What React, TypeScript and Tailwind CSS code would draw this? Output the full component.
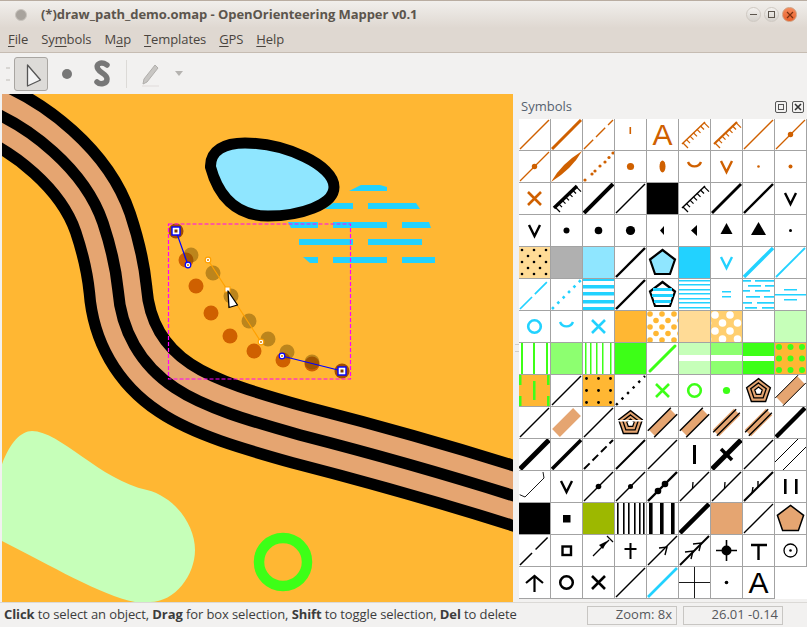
// App.tsx
// OpenOrienteering Mapper window: map canvas on the left, symbol palette dock on the right.
import type { ReactNode } from "react";

const O = "#cf6000";
const K = "#000000";
const B = "#22d2ff";
const G = "#3dff17";
const T = "#e5a571";
const LB = "#8fe6ff";
const Y = "#ffb733";

function Diag({ w = 1.5, c = K, dash, round }: { w?: number; c?: string; dash?: string; round?: boolean }) {
	return <line x1={1} y1={30} x2={30} y2={1} stroke={c} strokeWidth={w} strokeDasharray={dash} strokeLinecap={round ? "round" : "butt"} />;
}

function Dot({ x = 15.5, y = 15.5, r = 3, c = K }: { x?: number; y?: number; r?: number; c?: string }) {
	return <circle cx={x} cy={y} r={r} fill={c} />;
}

function Fill({ c }: { c: string }) {
	return <rect x={0} y={0} width={31} height={31} fill={c} />;
}

function Bar({ x = 0, y, w = 31, h, c }: { x?: number; y: number; w?: number; h: number; c: string }) {
	return <rect x={x} y={y} width={w} height={h} fill={c} />;
}

function Ruler({ c, w = 1.5 }: { c: string; w?: number }) {
	const ticks = [0, 1, 2, 3, 4, 5, 6];
	return (
		<g stroke={c} fill="none">
			<line x1={3} y1={25} x2={26} y2={3} strokeWidth={w} />
			{ticks.map((i) => {
				const x = 4 + i * 3.5;
				const y = 24 - i * 3.4;
				const len = i === 0 || i === 6 ? 5 : 3.5;
				return <line key={i} x1={x} y1={y} x2={x + len} y2={y + len} strokeWidth={1.2} />;
			})}
		</g>
	);
}

function Vee({ c }: { c: string }) {
	return <path d="M10,10 L15.5,21 L21,10" fill="none" stroke={c} strokeWidth={2.4} />;
}

function Smile({ c }: { c: string }) {
	return <path d="M9,11 A7,7 0 0 0 22,11" fill="none" stroke={c} strokeWidth={2.4} />;
}

function Cross({ c, w = 2.6 }: { c: string; w?: number }) {
	return <path d="M9,9 L22,22 M22,9 L9,22" stroke={c} strokeWidth={w} fill="none" />;
}

function Pent({ s = 1, fill, stroke = K, w = 2.2 }: { s?: number; fill: string; stroke?: string; w?: number }) {
	const pts = [[0, -13], [12.5, -3.5], [7.5, 11], [-7.5, 11], [-12.5, -3.5]]
		.map(([x, y]) => `${15.5 + x * s},${16 + y * s}`)
		.join(" ");
	return <polygon points={pts} fill={fill} stroke={stroke} strokeWidth={w} />;
}

function ConcPent({ open }: { open?: boolean }) {
	return (
		<>
			<Pent s={0.95} fill={T} w={1.4} />
			<Pent s={0.62} fill={T} w={1.3} />
			<Pent s={0.3} fill="#ffffff" w={1.2} />
			{open && <Bar x={2} y={13} w={27} h={1.5} c="#ffffff" />}
		</>
	);
}

// dot screen; odd rows shift by half a column unless stagger is off
function Dots({ c, r, step, rowStep, off = 3, stagger = true }: { c: string; r: number; step: number; rowStep: number; off?: number; stagger?: boolean }) {
	const out: ReactNode[] = [];
	for (let row = 0; off + row * rowStep < 34; row++) {
		for (let col = -1; off + col * step < 34; col++) {
			const x = off + col * step + (stagger && row % 2 ? step / 2 : 0);
			const y = off + row * rowStep;
			out.push(<circle key={`${row}-${col}`} cx={x} cy={y} r={r} fill={c} />);
		}
	}
	return <>{out}</>;
}

// tan band with a black line either side, d is the distance of the lines from the centre
function Road({ w, d, edge }: { w: number; d: number; edge: number }) {
	const n = d * 0.707;
	return (
		<>
			<line x1={5} y1={26} x2={26} y2={5} stroke={T} strokeWidth={w} />
			<line x1={4 - n} y1={27 - n} x2={27 - n} y2={4 - n} stroke={K} strokeWidth={edge} />
			<line x1={4 + n} y1={27 + n} x2={27 + n} y2={4 + n} stroke={K} strokeWidth={edge} />
		</>
	);
}

function Stripes({ bars, w }: { bars: number[]; w: number }) {
	return (
		<>
			{bars.map((x) => (
				<Bar key={x} x={x} y={0} w={w} h={31} c={K} />
			))}
		</>
	);
}

const letterClass: Record<string, string> = {
	orange: "text-[#cf6000]",
	black: "text-black",
};

// a string entry is a letter symbol ("A") in that colour, everything else is drawn
const symbols: ReactNode[] = [
	// row 1
	<Diag c={O} w={1.4} />, <Diag c={O} w={3} />, <Diag c={O} w={1.4} dash="13 4" />,
	<Bar x={14.5} y={8} w={1.6} h={7} c={O} />, "orange", <Ruler c={O} />, <Ruler c={O} w={2.2} />,
	<Diag c={O} w={1.5} />, <><Diag c={O} w={1.3} /><Dot c={O} r={2.7} /></>,
	// row 2
	<><Diag c={O} w={1.3} /><Dot c={O} r={2.7} /></>,
	<path d="M0,31 Q10,13 31,0 Q21,18 0,31 Z" fill={O} />,
	<><Dot x={2} y={29} r={1.6} c={O} /><Dot x={9} y={23} r={1.6} c={O} /><Dot x={12} y={20} r={1.6} c={O} /><Dot x={17} y={15} r={1.6} c={O} /><Dot x={22} y={11} r={1.6} c={O} /><Dot x={26} y={6.5} r={1.6} c={O} /><Dot x={30} y={2} r={1.6} c={O} /></>,
	<Dot r={3.6} c={O} />, <ellipse cx={15.5} cy={15.5} rx={3} ry={6} fill={O} />, <Smile c={O} />, <Vee c={O} />,
	<Dot r={1.3} c={O} />, <Dot r={2} c={O} />,
	// row 3
	<Cross c={O} />, <><Ruler c={K} w={3.5} /></>, <Diag w={4} />, <Diag w={1.4} />, <Fill c={K} />, <Ruler c={K} />,
	<Diag w={2.8} />, <Diag w={2.4} />, <Vee c={K} />,
	// row 4
	<Vee c={K} />, <Dot r={3} />, <Dot r={3.8} />, <Dot r={4.6} />,
	<polygon points="13,15.5 17,11 17,20" />, <polygon points="12,15.5 18,10 18,21" />,
	<polygon points="15.5,8 9.5,19 21.5,19" />, <polygon points="15.5,7 8,20 23,20" />, <Dot r={1.5} />,
	// row 5
	<><Fill c="#ffdb96" /><Dots c={K} r={1.3} step={12} rowStep={6} off={3} /></>, <Fill c="#b0b0b0" />, <Fill c={LB} />, <Diag w={2.4} />,
	<Pent fill={LB} />, <Fill c={B} />, <Vee c={B} />, <Diag c={B} w={3.4} />, <Diag c={B} w={1.8} />,
	// row 6
	<Diag c={B} w={1.7} dash="17 4" />, <Diag c={B} w={2.6} dash="2.6 5" />,
	<><Bar y={0} h={2} c={B} /><Bar y={6} h={3.5} c={B} /><Bar y={13} h={3.5} c={B} /><Bar y={21} h={3.5} c={B} /><Bar y={28} h={3} c={B} /></>,
	<Diag w={2.4} />,
	<><Pent fill="#ffffff" /><Bar x={6} y={9} w={19} h={3} c={B} /><Bar x={5} y={15} w={21} h={3} c={B} /><Bar x={7} y={21} w={17} h={3} c={B} /></>,
	<><Bar y={1} h={1.5} c={B} /><Bar y={5} h={1.5} c={B} /><Bar y={10} h={1.5} c={B} /><Bar y={14} h={1.5} c={B} /><Bar y={19} h={1.5} c={B} /><Bar y={23} h={1.5} c={B} /><Bar y={28} h={1.5} c={B} /></>,
	<><Bar x={11} y={12} w={9} h={1.5} c={B} /><Bar x={11} y={17} w={9} h={1.5} c={B} /></>,
	<><Bar x={0} y={1} w={8} h={1.7} c={B} /><Bar x={12} y={1} w={19} h={1.7} c={B} /><Bar x={5} y={6} w={13} h={1.7} c={B} /><Bar x={22} y={6} w={9} h={1.7} c={B} /><Bar x={0} y={11} w={7} h={1.7} c={B} /><Bar x={12} y={11} w={15} h={1.7} c={B} /><Bar x={3} y={17} w={14} h={1.7} c={B} /><Bar x={21} y={17} w={10} h={1.7} c={B} /><Bar x={0} y={23} w={9} h={1.7} c={B} /><Bar x={14} y={23} w={17} h={1.7} c={B} /><Bar x={2} y={28} w={12} h={1.7} c={B} /><Bar x={19} y={28} w={12} h={1.7} c={B} /></>,
	<><Bar y={15} h={1.5} c={B} /><Bar x={9} y={10} w={13} h={1.5} c={B} /><Bar x={9} y={20} w={13} h={1.5} c={B} /></>,
	// row 7
	<circle cx={15.5} cy={15.5} r={6.3} fill="none" stroke={B} strokeWidth={2.6} />, <Smile c={B} />, <Cross c={B} />,
	<Fill c={Y} />, <Dots c={Y} r={2.8} step={12} rowStep={6.5} off={3} />, <Fill c="#ffdb96" />, <><Fill c="#ffcf70" /><Dots c="#ffffff" r={3.8} step={15} rowStep={8} off={4} /></>, <Fill c="#ffffff" />, <Fill c="#c6ffb9" />,
	// row 8
	<><Bar x={2} y={0} w={2} h={31} c={G} /><Bar x={14} y={0} w={2} h={31} c={G} /><Bar x={27} y={0} w={2} h={31} c={G} /></>,
	<Fill c="#8dff70" />,
	<><Bar x={2} y={0} w={1.5} h={31} c={G} /><Bar x={7} y={0} w={1.5} h={31} c={G} /><Bar x={13} y={0} w={1.5} h={31} c={G} /><Bar x={19} y={0} w={1.5} h={31} c={G} /><Bar x={27} y={0} w={1.5} h={31} c={G} /></>,
	<Fill c={G} />, <line x1={3} y1={28} x2={28} y2={3} stroke={G} strokeWidth={3} strokeLinecap="round" />,
	<><Fill c="#c6ffb9" /><Bar y={12} h={6} c="#ffffff" /></>, <><Fill c="#8dff70" /><Bar y={12} h={6} c="#ffffff" /></>, <><Fill c={G} /><Bar y={13} h={5} c="#ffffff" /></>,
	<><Fill c={Y} /><Dot x={4} y={4} r={3} c={G} /><Dot x={15.5} y={4} r={3} c={G} /><Dot x={27} y={4} r={3} c={G} /><Dot x={4} y={15.5} r={3} c={G} /><Dot x={15.5} y={15.5} r={3} c={G} /><Dot x={27} y={15.5} r={3} c={G} /><Dot x={4} y={27} r={3} c={G} /><Dot x={15.5} y={27} r={3} c={G} /><Dot x={27} y={27} r={3} c={G} /></>,
	// row 9
	<><Fill c={Y} /><Bar x={0} y={0} w={2.5} h={10} c={G} /><Bar x={28} y={0} w={2.5} h={10} c={G} /><Bar x={14} y={6} w={2.5} h={19} c={G} /><Bar x={0} y={21} w={2.5} h={10} c={G} /><Bar x={28} y={21} w={2.5} h={10} c={G} /></>,
	<Diag w={1.5} />,
	<><Fill c={Y} /><Dots c={K} r={1.4} step={12} rowStep={12} off={3.5} stagger={false} /></>,
	<Diag w={2.4} dash="2.4 5.5" />, <Cross c={G} />,
	<circle cx={15.5} cy={15.5} r={6.3} fill="none" stroke={G} strokeWidth={2.6} />, <Dot r={3.6} c={G} />, <ConcPent />, <Road w={11} d={5.5} edge={1} />,
	// row 10
	<Diag w={1.5} />, <line x1={5} y1={26} x2={26} y2={5} stroke={T} strokeWidth={11} />, <Diag w={1.5} />, <ConcPent open />,
	<Road w={9} d={4.5} edge={1.4} />, <Road w={9} d={4.5} edge={1.4} />, <Road w={9} d={2.6} edge={1.4} />, <Road w={9} d={2.6} edge={1.4} />, <Diag w={4.4} />,
	// row 11
	<Diag w={5} />, <Diag w={3.5} />, <Diag w={2} dash="8 4" />, <Diag w={2} />, <Diag w={1.5} />,
	<Bar x={14} y={6} w={3} h={19} c={K} />,
	<><Diag w={5} /><line x1={10} y1={10} x2={21} y2={21} stroke={K} strokeWidth={3.5} /></>,
	<Diag w={1.4} />,
	<><line x1={0} y1={23} x2={23} y2={0} stroke={K} strokeWidth={1} /><line x1={8} y1={31} x2={31} y2={8} stroke={K} strokeWidth={1} /></>,
	// row 12
	<polyline points="0.7,23.7 6,26 25,7 24,1" fill="none" stroke={K} strokeWidth={0.9} />, <Vee c={K} />,
	<><Diag w={1.5} /><Dot r={2.8} /></>, <><Diag w={1.5} /><Dot r={2.5} /></>,
	<><Diag w={2.4} /><Dot x={11} y={20} r={3.3} /><Dot x={18} y={13} r={3.3} /></>,
	<><Diag w={1.5} /><path d="M13.5,17.5 L14,11" stroke={K} strokeWidth={1.3} /></>,
	<><Diag w={1.5} /><path d="M13.5,17.5 L14,11" stroke={K} strokeWidth={1.3} /></>,
	<><Diag w={2} /><path d="M9,22 L10,16 M15,16 L15,10" stroke={K} strokeWidth={1.4} /></>,
	<><Bar x={9} y={8} w={2.6} h={15} c={K} /><Bar x={20} y={8} w={2.6} h={15} c={K} /></>,
	// row 13
	<Fill c={K} />, <Bar x={12} y={12} w={7.5} h={7.5} c={K} />, <Fill c="#9db800" />,
	<Stripes bars={[2, 8, 13, 19, 24, 28]} w={1.6} />, <Stripes bars={[2, 13, 24]} w={3.6} />,
	<Diag w={4.5} />, <Fill c={T} />, <Diag w={1.3} />, <Pent s={1.05} fill={T} w={1.5} />,
	// row 14
	<Diag w={1.5} dash="17 5" />, <rect x={11.5} y={11.5} width={8.5} height={8.5} fill="#ffffff" stroke={K} strokeWidth={2.4} />,
	<><line x1={10} y1={21} x2={26} y2={5} stroke={K} strokeWidth={1.3} /><polygon points="24,6 16,10 20,14" /><line x1={24} y1={1} x2={30} y2={7} stroke={K} strokeWidth={1.2} /></>,
	<path d="M15.5,8 L15.5,24 M9.5,14 L21.5,14" stroke={K} strokeWidth={2} />,
	<><Diag w={1.4} /><path d="M12,13 L20,12 L18,20" fill="none" stroke={K} strokeWidth={1.4} /></>,
	<><Diag w={2} /><path d="M6,17 L14,16 L12,24 M14,9 L22,8 L20,16" fill="none" stroke={K} strokeWidth={1.4} /></>,
	<><Dot r={5} /><path d="M5,15.5 L26,15.5 M15.5,5 L15.5,26" stroke={K} strokeWidth={1.6} /></>,
	<path d="M8,10 L24,10 M15.5,10 L15.5,25" stroke={K} strokeWidth={2.4} fill="none" />,
	<><circle cx={15.5} cy={15.5} r={6.5} fill="none" stroke={K} strokeWidth={1.3} /><Dot r={1.3} /></>,
	// row 15
	<path d="M7,16 L15.5,9 L24,16 M15.5,9 L15.5,25" stroke={K} strokeWidth={2.2} fill="none" />,
	<circle cx={15.5} cy={15.5} r={6.3} fill="none" stroke={K} strokeWidth={2.5} />, <Cross c={K} />, <Diag w={1.5} />, <Diag c={B} w={2.6} />,
	<path d="M0,15.5 L31,15.5 M15.5,0 L15.5,31" stroke={K} strokeWidth={0.9} />, <Dot r={1.8} />, "black",
];

function HandleSquare({ x, y, c = "#0000ff" }: { x: number; y: number; c?: string }) {
	return (
		<g>
			<rect x={x - 4} y={y - 4} width={8} height={8} fill="#ffffff" stroke={c} strokeWidth={1.4} />
			<rect x={x - 1.5} y={y - 1.5} width={3} height={3} fill={c === "#0000ff" ? "#7a3a00" : "#ffb733"} />
		</g>
	);
}

function HandleRound({ x, y, c = "#0000ff" }: { x: number; y: number; c?: string }) {
	return (
		<g>
			<circle cx={x} cy={y} r={2.8} fill="#ffffff" stroke={c} strokeWidth={1.2} />
			<circle cx={x} cy={y} r={1} fill="#d08000" />
		</g>
	);
}

function MapCanvas() {
	const road = "M-22,106 C30,125 85,170 103,223 C112,250 116,270 118,290 C121,330 140,365 175,388 C205,408 250,421 300,435 C370,453 440,472 530,501";
	const solid: [number, number][] = [[186, 260], [196, 286], [211, 313], [230, 336], [254, 351], [283, 360], [312, 364]];
	const ghost: [number, number][] = [[191, 255], [213, 273], [231, 296], [249, 321], [268, 339], [287, 352], [312, 362]];
	const stripes = [
		"349,191 361,185 380,185 387,187 387,191",
		"325,209 333,203 353,203 353,209",
		"368,203 416,203 420,209 368,209",
		"288,222 318,222 318,228 291,228",
		"333,222 387,222 387,228 333,228",
		"402,222 429,222 431,228 402,228",
		"299,239 353,239 353,245 299,245",
		"368,239 422,239 422,245 368,245",
		"303,257 318,257 318,263 310,263",
		"333,257 387,257 387,263 333,263",
		"402,257 435,257 435,263 402,263",
	];
	return (
		<svg viewBox="2 94 511 508" className="block w-[511px] h-[508px] ml-[2px] bg-[#ffb733]">
			<path d="M0,470 C8,445 20,431 32,431 C60,431 100,480 147,490 C175,497 195,525 195,550 C195,575 175,602 150,602 L135,602 C100,595 50,565 0,540 Z" fill="#c6ffb9" />
			<circle cx={283} cy={562} r={24} fill="none" stroke={G} strokeWidth={10.5} />
			<path d={road} fill="none" stroke={K} strokeWidth={69} />
			<path d={road} fill="none" stroke={T} strokeWidth={46} />
			<path d={road} fill="none" stroke={K} strokeWidth={11.5} />
			{stripes.map((p) => (
				<polygon key={p} points={p} fill={B} />
			))}
			<path d="M210.5,167 C210,150 225,143 245,143 C285,143 334,165 334,187 C334,205 300,216 268,216 C235,216 218,195 210.5,167 Z" fill={LB} stroke={K} strokeWidth={11} />
			{solid.map(([x, y]) => (
				<circle key={`${x}`} cx={x} cy={y} r={7.5} fill={O} />
			))}
			{ghost.map(([x, y]) => (
				<circle key={`${x}`} cx={x} cy={y} r={7.5} fill="#6b4a00" fillOpacity={0.45} />
			))}
			<circle cx={176} cy={231} r={7.5} fill="#a04c00" />
			<circle cx={342} cy={371} r={7.5} fill="#a04c00" />
			<rect x={168.5} y={224} width={182} height={155} fill="none" stroke="#ff00ff" strokeWidth={1.2} strokeDasharray="4 2" />
			<path d="M176,231 L188,265 M282,356 L342,371" stroke="#0000ff" strokeWidth={1.2} fill="none" />
			<path d="M208,260 L261,342" stroke="#ffa000" strokeWidth={1.2} fill="none" />
			<HandleSquare x={176} y={231} />
			<HandleSquare x={342} y={371} />
			<HandleRound x={188} y={265} />
			<HandleRound x={282} y={356} />
			<HandleRound x={208} y={260} c="#ffa000" />
			<HandleRound x={261} y={342} c="#ffa000" />
			<rect x={225} y={287} width={5} height={5} fill="#ffffff" stroke="#ffa000" strokeWidth={1} />
			<polygon points="228,291 237.5,305 229,307.5" fill="#ffffff" stroke={K} strokeWidth={1.3} strokeLinejoin="round" />
		</svg>
	);
}

function WinButton({ children, close }: { children: ReactNode; close?: boolean }) {
	return (
		<div className={close
			? "w-[15px] h-[15px] rounded-full flex items-center justify-center bg-gradient-to-b from-[#f58a5a] to-[#e8602a] border border-[#d0a080]"
			: "w-[15px] h-[15px] rounded-full flex items-center justify-center bg-gradient-to-b from-[#f4f2ef] to-[#d6d2cd] border border-[#cfc9c2]"}>
			{children}
		</div>
	);
}

function TitleBar() {
	return (
		<div className="h-[28px] flex items-center bg-gradient-to-b from-[#f1efec] to-[#dfd8d1] border-t border-[#b9ada1] pl-[15px] pr-[10px]">
			<div className="w-[12px] h-[12px] rounded-full bg-[#a8a39d] border border-[#c8c3bd]" />
			<div className="ml-[14px] text-[13px] font-bold text-[#5c554d] whitespace-nowrap tracking-[-0.05px]">
				(*)draw_path_demo.omap - OpenOrienteering Mapper v0.1
			</div>
			<div className="ml-auto flex gap-[3px]">
				<WinButton><div className="w-[7px] h-[1.5px] bg-[#5c554d]" /></WinButton>
				<WinButton><div className="w-[7px] h-[7px] border border-[#5c554d]" /></WinButton>
				<WinButton close>
					<svg width="8" height="8" viewBox="0 0 8 8"><path d="M1,1 L7,7 M7,1 L1,7" stroke="#7a3010" strokeWidth="1.2" /></svg>
				</WinButton>
			</div>
		</div>
	);
}

function MenuItem({ pre, mn, post }: { pre?: string; mn: string; post: string }) {
	return (
		<span>
			{pre}
			<span className="underline underline-offset-2">{mn}</span>
			{post}
		</span>
	);
}

function MenuBar() {
	return (
		<div className="h-[25px] flex items-center gap-[13px] pl-[8px] bg-[#dfd8d1] border-b border-[#c6bcb2] text-[13px] tracking-[-0.1px] text-[#4a443e]">
			<MenuItem mn="F" post="ile" />
			<MenuItem pre="Sy" mn="m" post="bols" />
			<MenuItem pre="M" mn="a" post="p" />
			<MenuItem mn="T" post="emplates" />
			<MenuItem mn="G" post="PS" />
			<MenuItem mn="H" post="elp" />
		</div>
	);
}

function ToolBar() {
	return (
		<div className="h-[41px] flex items-center bg-[#f2f1f0]">
			<div className="ml-[6px] w-[4px] h-[14px] border-y-2 border-double border-[#d8d6d3]" />
			<div className="ml-[4px] w-[34px] h-[34px] rounded-[3px] border border-[#a9a6a2] bg-[#dddbd8] flex items-center justify-center">
				<svg width="24" height="28" viewBox="0 0 24 28">
					<polygon points="8.5,5 21.5,20 8.5,26" fill="#f4f4f4" stroke="#555555" strokeWidth="1.3" strokeLinejoin="round" />
				</svg>
			</div>
			<svg width="20" height="20" viewBox="0 0 20 20" className="ml-[9px]">
				<circle cx="10" cy="10" r="5" fill="#777777" />
			</svg>
			<svg width="22" height="28" viewBox="0 0 22 28" className="ml-[14px]">
				<path d="M16,5 C10,1 4,4 7,9 C9,13 16,14 16,19 C16,24 9,25 6,22" fill="none" stroke="#777777" strokeWidth="5.5" strokeLinecap="round" />
			</svg>
			<div className="ml-[13px] w-px h-[28px] bg-[#dcdad7]" />
			<svg width="22" height="26" viewBox="0 0 22 26" className="ml-[12px]">
				<path d="M5,18 L16,4 L19,7 L8,21 L4,23 Z" fill="#c8c6c3" stroke="#b0aeab" strokeWidth="1" />
				<path d="M3,25 L20,25" stroke="#e2e0dd" strokeWidth="1.2" />
			</svg>
			<div className="ml-[14px] w-0 h-0 border-x-[4px] border-x-transparent border-t-[5px] border-t-[#b5b3b0]" />
		</div>
	);
}

function SymbolDock() {
	return (
		<div className="w-[293px] flex bg-[#f2f1f0]">
			<div className="w-[5px] flex items-center">
				<div className="w-[4px] h-[8px] border-y border-[#cfcdca] ml-px" />
			</div>
			<div className="flex-1 flex flex-col">
				<div className="h-[25px] flex items-center text-[13px] text-[#56616f] pl-[2px]">
					Symbols
					<div className="ml-auto flex items-center gap-[5px] pr-[3px]">
						<div className="w-[12px] h-[12px] rounded-[2px] border border-[#555555] flex items-center justify-center">
							<div className="w-[6px] h-[6px] border border-[#555555]" />
						</div>
						<div className="w-[12px] h-[12px] rounded-[2px] border border-[#555555] flex items-center justify-center">
							<svg width="8" height="8" viewBox="0 0 8 8"><path d="M1,1 L7,7 M7,1 L1,7" stroke="#333333" strokeWidth="1.6" /></svg>
						</div>
					</div>
				</div>
				<div className="grid grid-cols-[repeat(9,32px)] auto-rows-[32px] bg-white w-[288px] h-[480px]">
					{symbols.map((s, i) => (
						<div key={i} className="border-r border-b border-[#a3a3a3]">
							{typeof s === "string" ? (
								<div className={`h-[31px] flex items-center justify-center text-[30px] leading-[31px] font-['Liberation_Sans',sans-serif] ${letterClass[s]}`}>A</div>
							) : (
								<svg width="31" height="31" viewBox="0 0 31 31" className="block">
									{s}
								</svg>
							)}
						</div>
					))}
				</div>
			</div>
		</div>
	);
}

function StatusBar() {
	return (
		<div className="h-[25px] flex items-center bg-[#f2f1f0] border-t border-[#dbd9d6] text-[13px] text-[#3c3c3c]">
			<div className="pl-[4px] whitespace-nowrap tracking-[-0.1px]">
				<b>Click</b> to select an object, <b>Drag</b> for box selection, <b>Shift</b> to toggle selection, <b>Del</b> to delete
			</div>
			<div className="ml-auto flex gap-[6px] pr-[24px]">
				<div className="w-[90px] h-[19px] border border-[#c8c6c3] flex items-center justify-end pr-[4px] text-[#55585c]">Zoom: 8x</div>
				<div className="w-[100px] h-[19px] border border-[#c8c6c3] flex items-center justify-end pr-[4px] text-[#55585c]">26.01 -0.14</div>
			</div>
		</div>
	);
}

export default function App() {
	return (
		<div className="w-[807px] h-[627px] flex flex-col overflow-hidden bg-[#f2f1f0] font-['Open_Sans',sans-serif]">
			<TitleBar />
			<MenuBar />
			<ToolBar />
			<div className="flex h-[508px]">
				<div className="w-[514px] bg-[#f2f1f0]">
					<MapCanvas />
				</div>
				<SymbolDock />
			</div>
			<StatusBar />
		</div>
	);
}
